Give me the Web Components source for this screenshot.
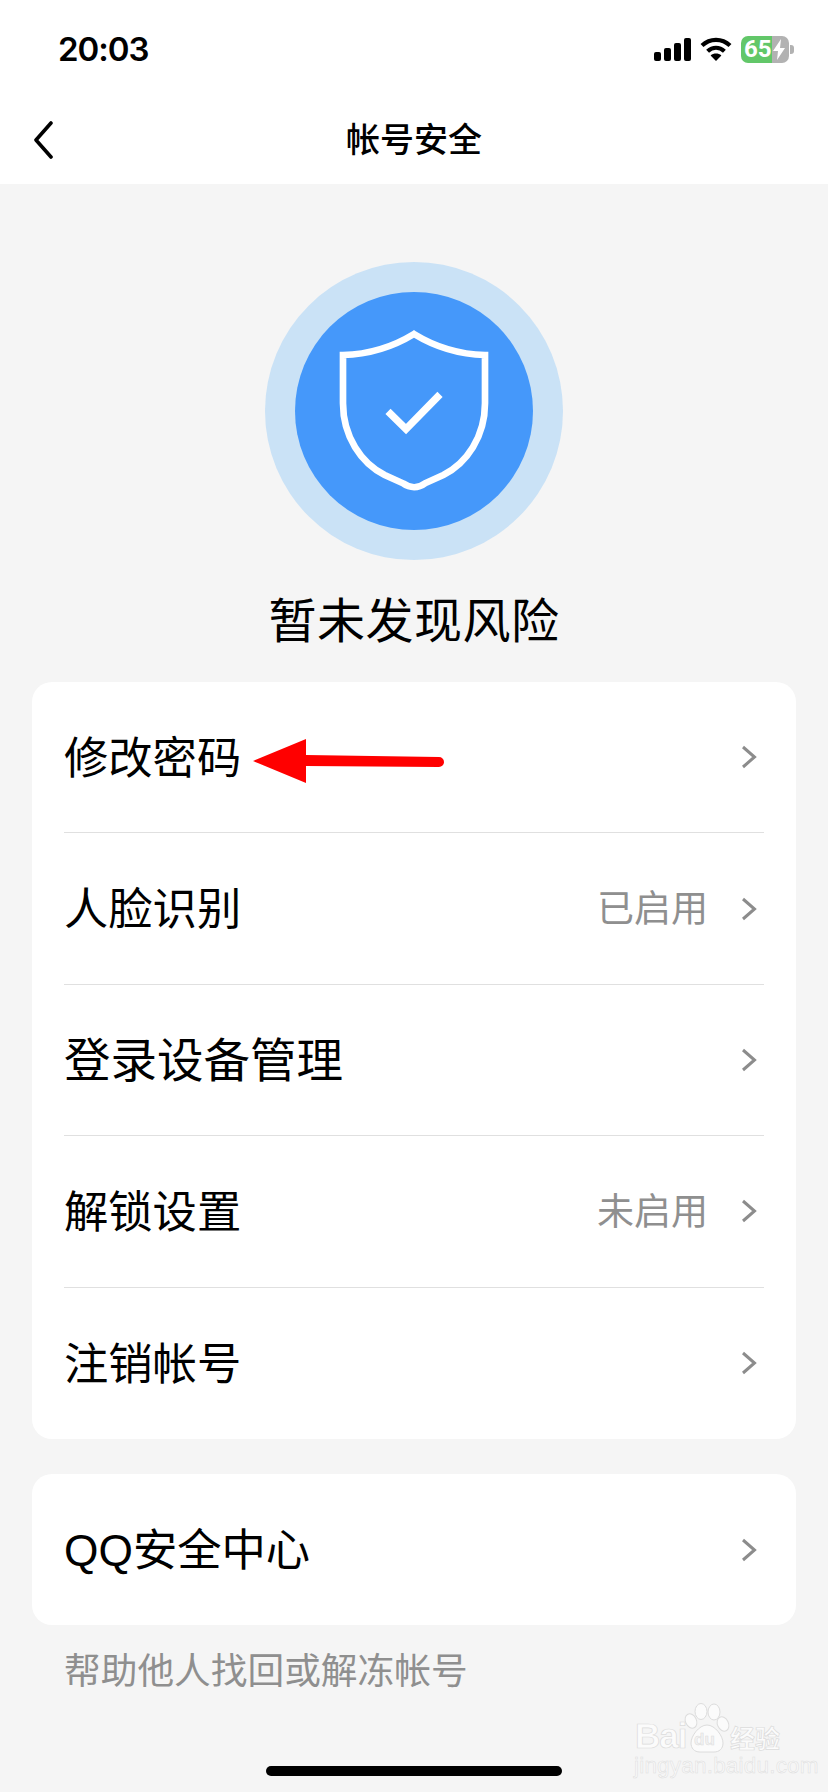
<!DOCTYPE html>
<html lang="zh">
<head>
<meta charset="utf-8">
<title>帐号安全</title>
<style>
  html, body { margin: 0; padding: 0; }
  body {
    width: 828px; height: 1792px; overflow: hidden; position: relative;
    background: #f5f5f5; color: #000;
    font-family: "Liberation Sans", "Noto Sans CJK SC", sans-serif;
    display: flex; flex-direction: column;
  }
</style>
</head>
<body>
<status-bar></status-bar>
<nav-bar>帐号安全</nav-bar>
<risk-hero>暂未发现风险</risk-hero>
<setting-group>
  <setting-row label="修改密码" mark></setting-row>
  <setting-row label="人脸识别" status="已启用"></setting-row>
  <setting-row label="登录设备管理" wide></setting-row>
  <setting-row label="解锁设置" status="未启用"></setting-row>
  <setting-row label="注销帐号" last></setting-row>
</setting-group>
<setting-group second>
  <setting-row label="QQ安全中心" last></setting-row>
</setting-group>
<help-note>帮助他人找回或解冻帐号</help-note>
<home-bar></home-bar>
<baidu-mark></baidu-mark>

<script>
// status bar: clock on the left, signal / wifi / battery on the right
class StatusBar extends HTMLElement {
  constructor() {
    super();
    this.attachShadow({mode: 'open'});
    this.shadowRoot.innerHTML = `
    <style>
      :host { display: flex; align-items: center; justify-content: space-between; height: 88px; padding: 10px 34px 0 58px; box-sizing: border-box; background: #fff; flex: none; }
      .time { font: 600 33px/1 Inter, "Liberation Sans", sans-serif; letter-spacing: -1px; }
      .icons { display: flex; align-items: center; gap: 9px; }
      .batt { position: relative; width: 48px; height: 27px; border-radius: 7px; overflow: hidden; background: linear-gradient(90deg, #62c769 0 31px, #b2b2b2 31px); display: flex; align-items: center; color: #fff; font: 700 24px/1 Roboto, sans-serif; padding-left: 3px; box-sizing: border-box; }
      .wrap { display: flex; align-items: center; gap: 1px; }
      .nub { width: 4px; height: 9px; background: #b2b2b2; border-radius: 0 3px 3px 0; }
      .bolt { position: absolute; left: 31px; top: 3px; }
    </style>
    <span class="time">20:03</span>
    <div class="icons">
      <svg width="37" height="23" viewBox="0 0 37 23" fill="#000">
        <rect x="0" y="14" width="7" height="9" rx="2"/>
        <rect x="10" y="10" width="7" height="13" rx="2"/>
        <rect x="20" y="5" width="7" height="18" rx="2"/>
        <rect x="30" y="0" width="7" height="23" rx="2"/>
      </svg>
      <svg width="32" height="24" viewBox="0 0 32 24" fill="none" stroke="#000" stroke-width="4.2">
        <path d="M2 8.600C10 1 22 1 30 8.600"/>
        <path d="M7.600 14.200C12.600 9.600 19.400 9.600 24.400 14.200"/>
        <path d="M16 24l-5.400-5.600C13.600 15.800 18.400 15.800 21.400 18.400z" fill="#000" stroke="none"/>
      </svg>
      <div class="wrap">
        <div class="batt">65
          <svg class="bolt" width="15" height="21" viewBox="0 0 15 21"><path d="M9 0L1 12h5l-1 9 8-12H8z" fill="#fff"/></svg>
        </div>
        <div class="nub"></div>
      </div>
    </div>`;
  }
}

class NavBar extends HTMLElement {
  constructor() {
    super();
    this.attachShadow({mode: 'open'});
    this.shadowRoot.innerHTML = `
    <style>
      :host { display: flex; align-items: center; justify-content: center; height: 96px; background: #fff; position: relative; flex: none; }
      .title { font: 500 34px/1 "Noto Sans CJK SC", sans-serif; margin-top: 4px; }
      .back { position: absolute; left: 33px; top: 33px; }
    </style>
    <svg class="back" width="22" height="38" viewBox="0 0 22 38" fill="none" stroke="#000" stroke-width="3.6" stroke-linecap="round" stroke-linejoin="round">
      <path d="M18 2L3 19l15 17"/>
    </svg>
    <span class="title"><slot></slot></span>`;
  }
}

class RiskHero extends HTMLElement {
  constructor() {
    super();
    this.attachShadow({mode: 'open'});
    this.shadowRoot.innerHTML = `
    <style>
      :host { display: flex; flex-direction: column; align-items: center; padding-top: 78px; height: 498px; box-sizing: border-box; flex: none; }
      .outer { width: 298px; height: 298px; border-radius: 50%; background: #cae2f6; display: flex; align-items: center; justify-content: center; }
      .inner { width: 238px; height: 238px; border-radius: 50%; background: #4598fa; display: flex; align-items: center; justify-content: center; }
      .title { font: 400 48px/1 "Noto Sans CJK SC", sans-serif; margin-top: 33px; letter-spacing: .5px; }
    </style>
    <div class="outer"><div class="inner">
      <svg width="238" height="238" viewBox="135 126 714 714" fill="none" stroke="#fff" stroke-width="20">
        <path d="M279 315C360 313 430 290 492 252C554 290 624 313 705 315L705 460C705 560 650 640 580 675L525 700C505 715 480 715 459 700L404 675C334 640 279 560 279 460Z"/>
        <path d="M414 484L468 537L570 433" stroke-width="22"/>
      </svg>
    </div></div>
    <div class="title"><slot></slot></div>`;
  }
}

class SettingGroup extends HTMLElement {
  constructor() {
    super();
    this.attachShadow({mode: 'open'});
    this.shadowRoot.innerHTML = `
    <style>
      :host { display: block; margin: 0 32px; background: #fff; border-radius: 20px; flex: none; }
      :host([second]) { margin-top: 35px; }
    </style>
    <slot></slot>`;
  }
}

class SettingRow extends HTMLElement {
  constructor() {
    super();
    this.attachShadow({mode: 'open'});
    var status = this.getAttribute('status');
    var arrow = this.hasAttribute('mark') ? `
      <svg class="mark" width="192" height="46" viewBox="0 0 192 46">
        <path d="M0 23L53 1V17L186 19a5 5 0 0 1 0 10L53 28V45Z" fill="#f00"/>
      </svg>` : '';
    this.shadowRoot.innerHTML = `
    <style>
      :host { display: block; position: relative; padding: 0 32px; }
      .row { height: 150.4px; display: flex; align-items: center; border-bottom: 1px solid #e0e0e0; }
      :host([last]) .row { border-bottom: none; height: 151.4px; }
      .label { flex: 1; font: 400 44.3px/1 "Liberation Sans", "Noto Sans CJK SC", sans-serif; margin-top: 3px; }
      :host([wide]) .label { font-size: 46.5px; }
      .status { font: 400 37px/1 "Noto Sans CJK SC", sans-serif; color: #8f8f8f; margin: -4px 33px 0 0; }
      .chev { margin-right: 7px; flex: none; }
      .mark { position: absolute; left: 221px; top: 56px; }
    </style>
    <div class="row">
      <span class="label">${this.getAttribute('label')}</span>
      ${status ? `<span class="status">${status}</span>` : ''}
      <svg class="chev" width="16" height="24" viewBox="0 0 16 24" fill="none" stroke="#8c8c8c" stroke-width="3"><path d="M2 2l11.500 10L2 22"/></svg>
    </div>
    ${arrow}`;
  }
}

class HelpNote extends HTMLElement {
  constructor() {
    super();
    this.attachShadow({mode: 'open'});
    this.shadowRoot.innerHTML = `
    <style>
      :host { display: block; padding: 21px 0 0 64px; font: 400 36.7px/1.25 "Noto Sans CJK SC", sans-serif; color: #8f8f8f; flex: none; }
    </style>
    <slot></slot>`;
  }
}

class HomeBar extends HTMLElement {
  constructor() {
    super();
    this.attachShadow({mode: 'open'});
    this.shadowRoot.innerHTML = `
    <style>
      :host { display: block; position: absolute; left: 266px; top: 1766px; width: 296px; height: 10px; border-radius: 5px; background: #000; }
    </style>`;
  }
}

// the watermark stamped over the bottom right corner
class BaiduMark extends HTMLElement {
  constructor() {
    super();
    this.attachShadow({mode: 'open'});
    this.shadowRoot.innerHTML = `
    <style>
      :host { display: block; position: absolute; left: 632px; top: 1700px; width: 156px; height: 78px; color: #fbfbfb; font-family: "Liberation Sans", sans-serif; }
      span { position: absolute; white-space: nowrap; -webkit-text-stroke: .7px #dcdcdc; }
      .bai { left: 3px; top: 22px; font: 700 35px/.8 "Liberation Sans", sans-serif; letter-spacing: -1px; }
      .du { left: 62px; top: 31px; font: 700 17px/1 "Liberation Sans", sans-serif; -webkit-text-stroke: .5px #dcdcdc; color: #f2f2f2; }
      .jy { left: 98px; top: 25px; font: 700 25px/1 "Noto Sans CJK SC", sans-serif; }
      .url { left: 2px; top: 55px; font: 400 22.500px/1 "Liberation Sans", sans-serif; letter-spacing: .2px; color: #f8f8f8; -webkit-text-stroke: .5px #dedede; }
      svg { position: absolute; left: 52px; top: 2px; }
    </style>
    <svg width="46" height="52" viewBox="0 0 46 52" fill="#fbfbfb" stroke="#dcdcdc">
      <ellipse cx="17" cy="9.500" rx="6" ry="8"/>
      <ellipse cx="30" cy="10" rx="6" ry="8"/>
      <ellipse cx="7" cy="19" rx="5.500" ry="7.500" transform="rotate(-25 7 19)"/>
      <ellipse cx="39" cy="22" rx="5.500" ry="7.500" transform="rotate(-25 39 22)"/>
      <path d="M23 23C31 23 39 34 39 41C39 47 35 50 30 50H16C10 50 7 46 7 41C7 34 15 23 23 23Z"/>
    </svg>
    <span class="bai">Bai</span>
    <span class="du">du</span>
    <span class="jy">经验</span>
    <span class="url">jingyan.baidu.com</span>`;
  }
}

customElements.define('status-bar', StatusBar);
customElements.define('nav-bar', NavBar);
customElements.define('risk-hero', RiskHero);
customElements.define('setting-group', SettingGroup);
customElements.define('setting-row', SettingRow);
customElements.define('help-note', HelpNote);
customElements.define('home-bar', HomeBar);
customElements.define('baidu-mark', BaiduMark);
</script>
</body>
</html>
